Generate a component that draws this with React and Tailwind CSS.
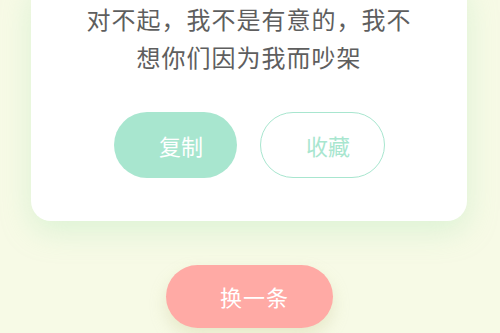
import React from 'react';

const font = { fontFamily: '"Noto Sans CJK SC", "Noto Sans", sans-serif' };

export default function App() {
    return (
        <div className="w-[500px] h-[333px] overflow-hidden bg-[#f7fae6] flex flex-col items-start" style={font}>
            <div className="ml-[31px] w-[436px] -mt-[20px] pt-[20px] pb-[43px] bg-white rounded-[20px] shadow-[0_10px_30px_rgba(168,230,180,0.35)] flex flex-col items-center">
                <p className="w-[336px] text-center text-[24px] leading-[38px] tracking-[1px] text-[#5e5e5e]">
                    对不起，我不是有意的，我不想你们因为我而吵架
                </p>
                <div className="mt-[36px] flex gap-[23px]">
                    <button className="w-[123px] h-[66px] rounded-full bg-[#a8e6cf] text-white text-[22px] pl-[12px]">
                        复制
                    </button>
                    <button className="w-[125px] h-[66px] rounded-full border border-[#a8e6cf] text-[#a8e6cf] text-[22px] pl-[12px]">
                        收藏
                    </button>
                </div>
            </div>
            <button className="mt-[44px] ml-[166px] w-[167px] h-[63px] rounded-full bg-[#ffaaa5] text-white text-[22px] tracking-[1px] pl-[10px] shadow-[0_8px_16px_rgba(200,200,150,0.35)]">
                换一条
            </button>
        </div>
    );
}
